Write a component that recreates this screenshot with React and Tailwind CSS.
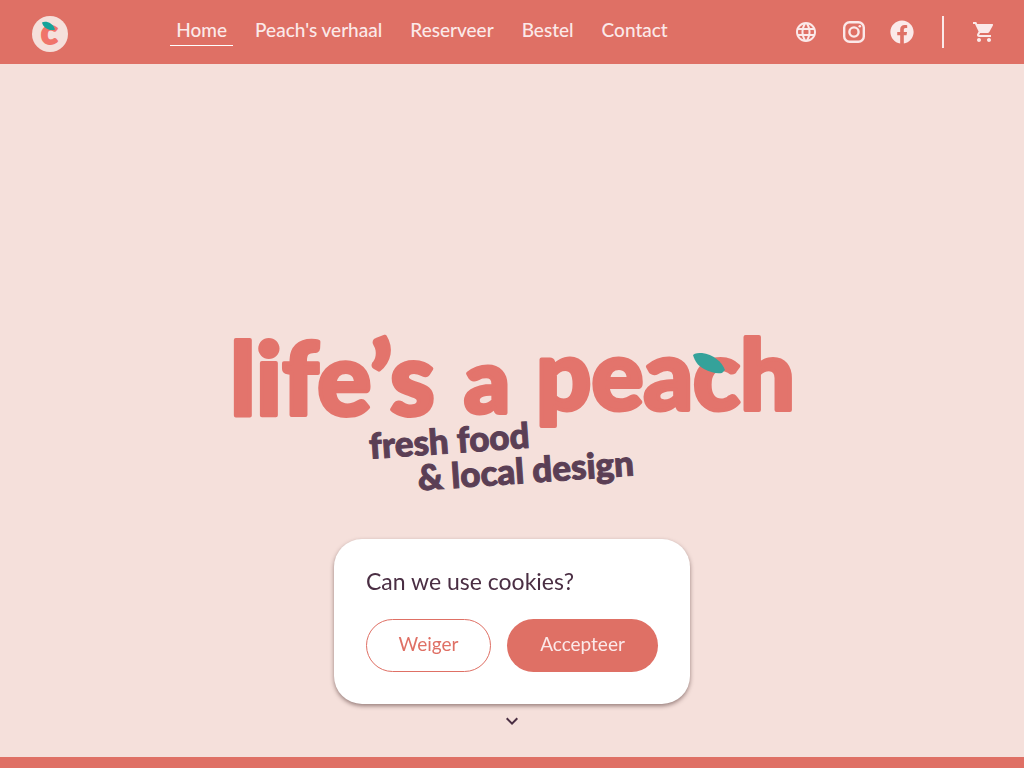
import { useState } from 'react';
import { FaFacebook } from 'react-icons/fa';
import { MdExpandMore, MdLanguage, MdShoppingCart } from 'react-icons/md';

const navItems = [
  { label: 'Home', href: '#home', active: true },
  { label: "Peach's verhaal", href: '#verhaal' },
  { label: 'Reserveer', href: '#reserveer' },
  { label: 'Bestel', href: '#bestel' },
  { label: 'Contact', href: '#contact' },
];

const iconButton = 'flex h-12 w-12 items-center justify-center';

const PeachMark = () => (
  <svg viewBox="0 0 36 36" className="h-9 w-9 overflow-visible" aria-hidden="true">
    <circle cx="18" cy="18" r="18" fill="#f5e0db" />
    <text x="9" y="28" fontSize="34" fontWeight="900" fill="#f0746a" stroke="#f0746a" strokeWidth="2" strokeLinejoin="round">
      c
    </text>
    <path d="M10 6.5 C14 4.5 21 7 23 13.5 C18 15.5 11 12 10 6.5 Z" fill="#16a39a" />
  </svg>
);

const InstagramIcon = () => (
  <svg viewBox="0 0 24 24" className="h-6 w-6" fill="none" stroke="currentColor" strokeWidth="2.4" aria-hidden="true">
    <rect x="2.2" y="2.2" width="19.6" height="19.6" rx="5.4" />
    <circle cx="12" cy="12" r="4.6" />
    <circle cx="17.8" cy="6.2" r="1.3" fill="currentColor" stroke="none" />
  </svg>
);

const Wordmark = () => (
  <svg viewBox="0 0 560 160" className="w-[560px] max-w-full overflow-visible">
    <g fontWeight="900" fill="#e3746c" stroke="#e3746c" strokeWidth="4" strokeLinejoin="round">
      <text x="-2" y="84" fontSize="101">life’s</text>
      <text x="232" y="82" fontSize="90">a</text>
      <text x="304" y="79" fontSize="97">peach</text>
    </g>
    <path d="M461 24 C463 22 467 22 470 22 C481 23 490 31 493 39 L490 42 C484 43 478 41 472 38 C465 34 463 30 461 24 Z" fill="#35a29a" />
    <g fontSize="35" fontWeight="900" fill="#5b3f55" stroke="#5b3f55" strokeWidth="1" transform="rotate(-4 136 127)">
      <text x="138" y="128">fresh food</text>
      <text x="184" y="163">&amp; local design</text>
    </g>
  </svg>
);

const Header = () => (
  <header className="flex h-16 items-center justify-between bg-[#df7065] pr-4 pl-8 text-[#fbe9e9]">
    <a href="#home" aria-label="Peach" className="pt-1">
      <PeachMark />
    </a>
    <nav className="mr-1.5 flex gap-4">
      {navItems.map((item) => (
        <a
          key={item.label}
          href={item.href}
          className={`border-b px-1.5 pb-[3px] text-[19px] leading-6 font-medium ${item.active ? 'border-white' : 'border-transparent'}`}
        >
          {item.label}
        </a>
      ))}
    </nav>
    <div className="flex items-center">
      <button type="button" aria-label="Taal" className={iconButton}>
        <MdLanguage size={24} />
      </button>
      <a href="#instagram" aria-label="Instagram" className={iconButton}>
        <InstagramIcon />
      </a>
      <a href="#facebook" aria-label="Facebook" className={iconButton}>
        <FaFacebook size={24} />
      </a>
      <div className="mx-4 h-8 w-0.5 bg-[#fbe9e9]" />
      <button type="button" aria-label="Winkelwagen" className={iconButton}>
        <MdShoppingCart size={24} />
      </button>
    </div>
  </header>
);

const CookieDialog = ({ onClose }) => (
  <div
    role="dialog"
    aria-labelledby="cookie-title"
    className="fixed bottom-16 left-1/2 w-[356px] max-w-full -translate-x-1/2 rounded-[28px] bg-white p-8 shadow-[0_2px_4px_rgba(60,30,30,0.5)]"
  >
    <h2 id="cookie-title" className="mb-7 text-[23px] leading-5 text-[#4a2e43]">
      Can we use cookies?
    </h2>
    <div className="flex gap-4 text-[19px] leading-6">
      <button
        type="button"
        onClick={onClose}
        className="h-[53px] w-[125px] rounded-full border border-[#df7065] pb-1 text-[#df7065]"
      >
        Weiger
      </button>
      <button
        type="button"
        onClick={onClose}
        className="h-[53px] flex-1 rounded-full bg-[#df7065] pb-1 text-[#fbe9e9]"
      >
        Accepteer
      </button>
    </div>
  </div>
);

export default function App() {
  const [showCookies, setShowCookies] = useState(true);

  return (
    <div className="flex min-h-screen flex-col bg-[#df7065] font-['Lato','Open_Sans',sans-serif]">
      <Header />
      <main id="home" className="grid flex-1 grid-rows-[1fr_auto_1fr] justify-items-center bg-[#f5e0db]">
        <h1 className="row-start-2">
          <Wordmark />
        </h1>
        <a href="#verhaal" aria-label="Scroll naar beneden" className="row-start-3 self-end pb-6 text-[#4a2e43]">
          <MdExpandMore size={24} />
        </a>
      </main>
      <footer className="h-[11px]" />
      {showCookies && <CookieDialog onClose={() => setShowCookies(false)} />}
    </div>
  );
}
